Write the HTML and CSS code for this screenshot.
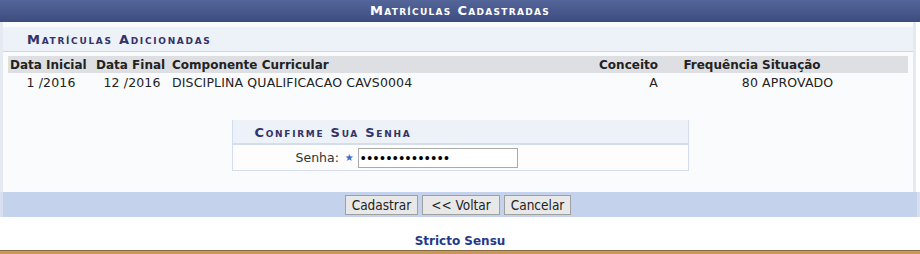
FILE: index.html
```html
<!DOCTYPE html>
<html lang="pt-BR">
<head>
    <meta charset="UTF-8">
    <title>Matrículas Cadastradas</title>
    <link rel="stylesheet" href="styles.css">
</head>
<body>
    <div class="formulario">
        <div class="caption">Matrículas Cadastradas</div>
        <div class="corpo">
            <div class="subtitulo">Matrículas Adicionadas</div>
            <table class="listagem">
                <thead>
                    <tr>
                        <th class="c-ini">Data Inicial</th>
                        <th class="c-fim">Data Final</th>
                        <th>Componente Curricular</th>
                        <th class="direita">Conceito</th>
                        <th class="direita c-freq">Frequência</th>
                        <th class="c-sit">Situação</th>
                    </tr>
                </thead>
                <tbody>
                    <tr>
                        <td class="centro">1 /2016</td>
                        <td class="centro">12 /2016</td>
                        <td>DISCIPLINA QUALIFICACAO CAVS0004</td>
                        <td class="direita">A</td>
                        <td class="direita">80</td>
                        <td>APROVADO</td>
                    </tr>
                </tbody>
            </table>

            <div class="senha-box">
                <div class="senha-titulo">Confirme Sua Senha</div>
                <div class="senha-linha">
                    <label for="senha">Senha:</label>
                    <span class="obrigatorio">&#9733;</span>
                    <input type="password" id="senha" value="12345678901234">
                </div>
            </div>
        </div>
        <div class="botoes">
            <button type="button">Cadastrar</button>
            <button type="button">&lt;&lt; Voltar</button>
            <button type="button">Cancelar</button>
        </div>
    </div>

    <div class="rodape">
        <a href="#">Stricto Sensu</a>
    </div>
    <div class="barra"></div>
</body>
</html>
```

FILE: styles.css
```css
* {
    box-sizing: border-box;
}

body {
    margin: 0;
    background: #ffffff;
    font-family: "DejaVu Sans", Verdana, sans-serif;
    font-size: 11px;
    color: #222222;
}

.formulario {
    width: 916px;
}

.caption {
    height: 22px;
    line-height: 22px;
    background: linear-gradient(#54659a, #3d4c7e);
    color: #ffffff;
    text-align: center;
    font-weight: bold;
    font-variant: small-caps;
    font-size: 13px;
    letter-spacing: 1.3px;
    margin-right: -4px;
}

.corpo {
    background: #f9fbfd;
    border-left: 3px solid #e4e9f2;
    border-right: 3px solid #e4e9f2;
    padding: 5px 0 21px;
}

.subtitulo {
    height: 25px;
    line-height: 25px;
    padding-left: 24px;
    background: #edf1f8;
    border-bottom: 1px solid #c8d5ec;
    color: #333366;
    font-weight: bold;
    font-variant: small-caps;
    font-size: 13px;
    letter-spacing: 1.7px;
}

.listagem {
    border-collapse: collapse;
    margin: 4px 5px 0 5px;
    width: 900px;
}

.listagem th {
    background: #dedfe3;
    font-weight: bold;
    text-align: left;
    font-size: 12px;
    height: 17px;
    padding: 0 2px;
    white-space: nowrap;
}

.listagem td {
    height: 19px;
    padding: 0 2px;
    font-size: 12.5px;
    letter-spacing: 0.15px;
}

.listagem .c-ini {
    width: 86px;
}

.listagem .c-fim {
    width: 76px;
}

.listagem .c-freq {
    width: 100px;
}

.listagem .c-sit {
    width: 148px;
}

.direita {
    text-align: right !important;
}

.centro {
    text-align: center;
}

.senha-box {
    width: 457px;
    margin: 28px auto 0;
    border: 1px solid #d4ddee;
    border-top: none;
    position: relative;
    left: 2px;
}

.senha-titulo {
    height: 25px;
    line-height: 25px;
    padding-left: 22px;
    background: #edf1f8;
    border-bottom: 2px solid #d4ddee;
    color: #333366;
    font-weight: bold;
    font-variant: small-caps;
    font-size: 13px;
    letter-spacing: 1.7px;
}

.senha-linha {
    display: flex;
    align-items: center;
    height: 25px;
    padding-left: 63px;
    background: #fdfdfd;
}

.senha-linha label {
    font-size: 12.5px;
    color: #333333;
}

.obrigatorio {
    color: #3c6bc7;
    font-size: 10px;
    margin: 0 4px 0 6px;
}

.senha-linha input {
    width: 160px;
    height: 20px;
    border: 1px solid #aaaaaa;
    font-size: 14px;
    letter-spacing: 1.5px;
    padding: 0 2px;
}

.botoes {
    display: flex;
    justify-content: center;
    gap: 4px;
    background: #c4d2eb;
    height: 25px;
    align-items: center;
    border-left: 3px solid #d6e0f1;
    border-right: 3px solid #d6e0f1;
    margin-right: -4px;
    padding-right: 4px;
}

.botoes button {
    font-family: "DejaVu Sans Condensed", "Liberation Sans Narrow", sans-serif;
    font-size: 13.5px;
    background: #e8e8e8;
    border: 1px solid #a0a0a0;
    color: #222222;
    height: 20px;
    padding: 0 6px;
    cursor: pointer;
}

.botoes button:nth-child(2) {
    padding: 0 8px;
}

.rodape {
    text-align: center;
    padding-top: 17px;
    height: 33px;
}

.rodape a {
    color: #1f3a8a;
    font-weight: bold;
    font-size: 12px;
    text-decoration: none;
}

.barra {
    height: 4px;
    background: #c8975a;
    border-top: 1px solid #8a6a40;
}
```
